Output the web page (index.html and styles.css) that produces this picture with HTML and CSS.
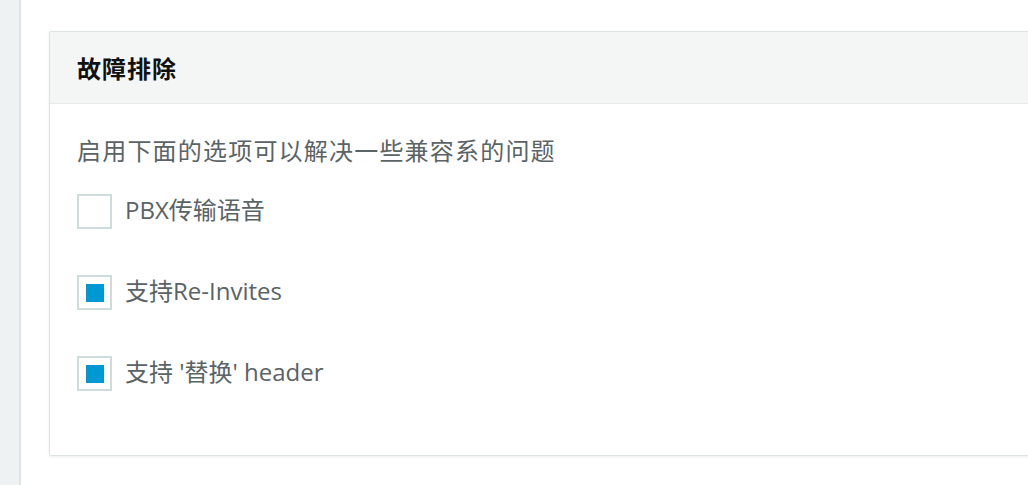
FILE: index.html
```html
<!DOCTYPE html>
<html>
<head>
  <meta http-equiv="CONTENT-TYPE" content="text/html; charset=UTF-8">
  <meta name="viewport" content="width=device-width, initial-scale=1.0"/>
  <title>故障排除</title>
  <link rel="stylesheet" href="styles.css">
</head>
<body>
  <div class="sidebar"></div>
  <div class="main">
    <div class="card">
      <div class="card-head">故障排除</div>
      <div class="card-body">
        <p class="desc">启用下面的选项可以解决一些兼容系的问题</p>
        <label class="option">
          <span class="box"></span>
          <span class="label">PBX传输语音</span>
        </label>
        <label class="option">
          <span class="box checked"></span>
          <span class="label">支持Re-Invites</span>
        </label>
        <label class="option">
          <span class="box checked"></span>
          <span class="label">支持 '替换' header</span>
        </label>
      </div>
    </div>
  </div>
</body>
</html>
```

FILE: styles.css
```css
html, body {
  margin: 0;
  height: 100%;
}
body {
  display: flex;
  overflow: hidden;
  background: #fff;
  font-family: "Open Sans", "Noto Sans CJK SC", sans-serif;
}
.sidebar {
  width: 19px;
  flex: none;
  background: #eef2f3;
  border-right: 2px solid #dde5e6;
}
.main {
  flex: 1;
  padding: 31px 0 0 28px;
}
.card {
  width: 1010px;
  height: 423px;
  background: #fff;
  border: 1px solid #dde3e5;
  border-radius: 2px;
  box-shadow: 0 1px 3px rgba(0, 0, 0, 0.08);
}
.card-head {
  height: 71px;
  line-height: 71px;
  padding-left: 27px;
  background: #f4f6f6;
  border-bottom: 1px solid #e6eaeb;
  font-family: "Noto Sans CJK SC", sans-serif;
  font-size: 24px;
  font-weight: bold;
  color: #111;
  letter-spacing: 1px;
}
.card-body {
  display: flex;
  flex-direction: column;
  gap: 46px;
  padding: 30px 27px 0;
}
.desc {
  margin: 0 0 -18px;
  font-family: "Noto Sans CJK SC", sans-serif;
  font-size: 24px;
  line-height: 32px;
  color: #5a6366;
  letter-spacing: 1.2px;
}
.option {
  display: flex;
  align-items: center;
  gap: 13px;
  height: 35px;
}
.box {
  width: 31px;
  height: 31px;
  border: 2px solid #cfdcdd;
  display: flex;
  align-items: center;
  justify-content: center;
}
.box.checked::after {
  content: "";
  width: 18px;
  height: 18px;
  background: #0098d4;
}
.label {
  font-size: 24px;
  line-height: 32px;
  margin-top: -3px;
  color: #5a6366;
}
```
